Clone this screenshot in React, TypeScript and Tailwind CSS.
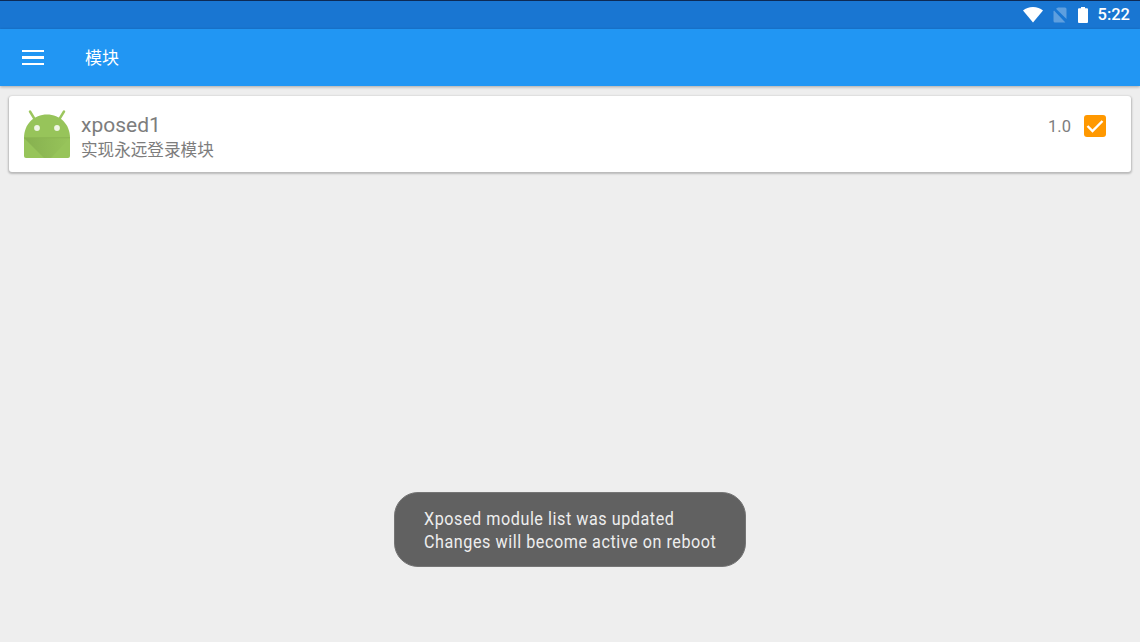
import React from "react";

const cjk = "font-['Roboto','Noto_Sans_CJK_SC',sans-serif]";

function Wifi() {
  return (
    <svg width="20" height="16" viewBox="0 0 20 16" className="block">
      <path d="M10 15.5 L0 3.6 C2.6 1.4 6 0 10 0 C14 0 17.4 1.4 20 3.6 Z" fill="#fff" />
    </svg>
  );
}

function NoSim() {
  return (
    <svg width="14" height="16" viewBox="0 0 14 16" className="block">
      <path d="M5 0.5 H12 Q13.5 0.5 13.5 2 V12 L3 1.8 Z" fill="#fff" fillOpacity="0.3" />
      <path d="M1 3.6 L12.4 15.5 H2 Q0.5 15.5 0.5 14 V4.5 Z" fill="#fff" fillOpacity="0.3" />
    </svg>
  );
}

function Battery() {
  return (
    <svg width="10" height="16" viewBox="0 0 10 16" className="block">
      <path d="M3 0 H7 V1.2 H9 Q10 1.2 10 2.2 V15 Q10 16 9 16 H1 Q0 16 0 15 V2.2 Q0 1.2 1 1.2 H3 Z" fill="#fff" />
    </svg>
  );
}

function AndroidIcon() {
  return (
    <svg width="48" height="50" viewBox="0 0 48 50" className="block">
      <defs>
        <linearGradient id="fold" x1="0" y1="0" x2="1" y2="0">
          <stop offset="0" stopColor="#86b04f" />
          <stop offset="1" stopColor="#97c45a" />
        </linearGradient>
      </defs>
      <path d="M7 1.5 L12.5 10.5" stroke="#9CC65E" strokeWidth="2.4" strokeLinecap="round" />
      <path d="M41 1.5 L35.5 10.5" stroke="#9CC65E" strokeWidth="2.4" strokeLinecap="round" />
      <path d="M1 28 C1 14 11 4.5 24 4.5 C37 4.5 47 14 47 28 Z" fill="#97c45a" />
      <path d="M1 28 H47 V46 Q47 48 45 48 H3 Q1 48 1 46 Z" fill="#97c45a" />
      <path d="M1 28 H47 L28 48 H21 Z" fill="url(#fold)" />
      <path d="M1 27.2 H47 V28.2 H1 Z" fill="#8ab552" />
      <circle cx="14" cy="18" r="2.9" fill="#fff" fillOpacity="0.85" />
      <circle cx="34" cy="18" r="2.9" fill="#fff" fillOpacity="0.85" />
    </svg>
  );
}

export default function App() {
  return (
    <div className={`relative w-[1140px] h-[642px] overflow-hidden bg-[#eeeeee] flex flex-col ${cjk}`}>
      <div className="h-[29px] bg-[#1976d2] border-t border-[#0d2a55] flex items-center justify-end pr-[10px] shrink-0">
        <div className="flex items-center">
          <Wifi />
          <div className="ml-[10px]"><NoSim /></div>
          <div className="ml-[11px]"><Battery /></div>
          <span className="ml-[10px] text-white text-[16.5px] font-medium leading-none">5:22</span>
        </div>
      </div>
      <div className="h-[57px] bg-[#2196f3] flex items-center shrink-0 shadow-[0_1px_3px_rgba(0,0,0,0.3)] z-10">
        <div className="ml-[22px] flex flex-col gap-[4px] w-[22px]">
          <div className="h-[2.5px] bg-white" />
          <div className="h-[2.5px] bg-white" />
          <div className="h-[2.5px] bg-white" />
        </div>
        <span className="ml-[41px] mt-[2px] text-white text-[17px]">模块</span>
      </div>
      <div className="mt-[10px] ml-[9px] w-[1122px] h-[76px] bg-white rounded-[3px] shadow-[0_1px_2px_1px_rgba(0,0,0,0.22)] flex items-center">
        <div className="ml-[14px] mt-[1px]"><AndroidIcon /></div>
        <div className="ml-[10px] flex flex-col mt-[8px]">
          <span className="text-[#7d7d7d] text-[21px] leading-[26px]">xposed1</span>
          <span className="text-[#7d7d7d] text-[16.6px] leading-[26px]">实现永远登录模块</span>
        </div>
        <span className="ml-auto mb-[13px] mr-[1px] text-[#7d7d7d] text-[16.5px]">1.0</span>
        <div className="ml-[12px] mr-[25px] mb-[17px] w-[22px] h-[22px] rounded-[3px] bg-[#ff9800] flex items-center justify-center">
          <svg width="18" height="14" viewBox="0 0 18 14"><path d="M1.5 7 L6.5 12 L16.5 2" fill="none" stroke="#fff" strokeWidth="2.4" /></svg>
        </div>
      </div>
      <div className="absolute left-[394px] top-[492px] w-[352px] h-[75px] rounded-[24px] bg-[#616161] border border-[#757575] flex flex-col justify-center pl-[29px]">
        <span className="text-[#eeeeee] text-[19px] leading-[23px] tracking-[0.65px] whitespace-nowrap origin-left scale-x-[0.85]">Xposed module list was updated</span>
        <span className="text-[#eeeeee] text-[19px] leading-[23px] tracking-[0.65px] whitespace-nowrap origin-left scale-x-[0.85]">Changes will become active on reboot</span>
      </div>
    </div>
  );
}
